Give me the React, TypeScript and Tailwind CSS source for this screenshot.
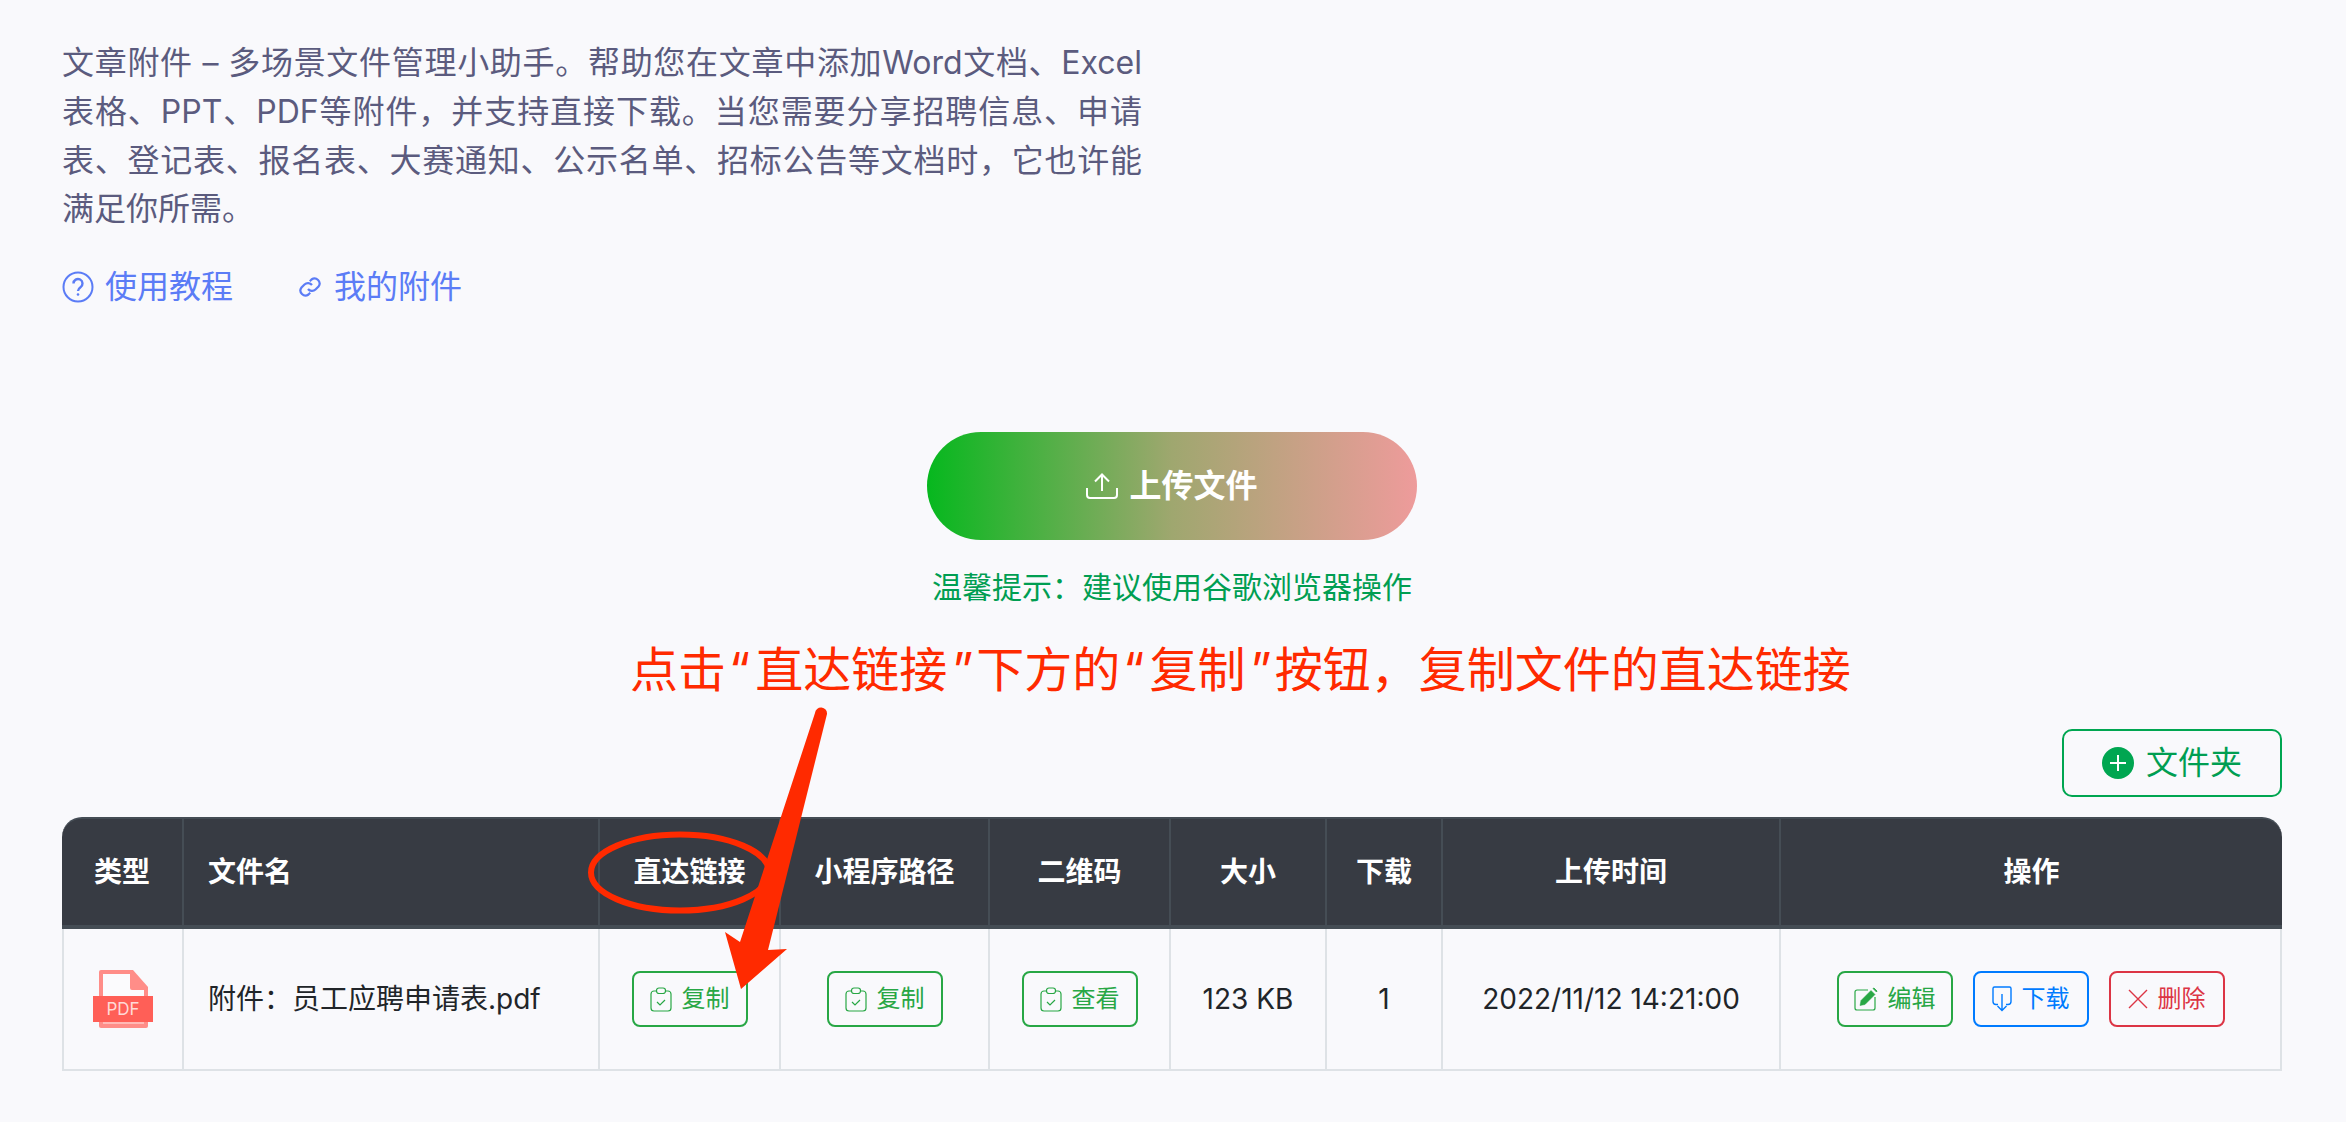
import type { ReactNode } from "react";

function ClipIcon() {
  return (
    <svg width="22" height="25" viewBox="0 0 22 25" fill="none" stroke="currentColor" strokeWidth="1.2">
      <path d="M6.5 4H4a3 3 0 0 0-3 3v14a3 3 0 0 0 3 3h14a3 3 0 0 0 3-3V7a3 3 0 0 0-3-3h-2.500" />
      <rect x="6.500" y="1" width="9" height="5.500" rx="2.500" />
      <path d="M7 15l3 3 5-5" />
    </svg>
  );
}

function EditIcon() {
  return (
    <svg width="24" height="24" viewBox="0 0 24 24" fill="none" stroke="currentColor">
      <path d="M14 3H3a2 2 0 0 0-2 2v16a2 2 0 0 0 2 2h16a2 2 0 0 0 2-2V10" strokeWidth="1.200" />
      <path d="M6 18.500l1-5L17 3.500l4 4-10 10z" fill="currentColor" strokeWidth="0.500" />
      <path d="M19 1.500l1-.5 3 3-.5 1z" fill="currentColor" strokeWidth="0.800" />
    </svg>
  );
}

function DownloadIcon() {
  return (
    <svg width="20" height="26" viewBox="0 0 20 26" fill="none" stroke="currentColor" strokeWidth="1.400">
      <path d="M6 18.500H4a3 3 0 0 1-3-3V2.500A1.500 1.500 0 0 1 2.500 1h15A1.500 1.500 0 0 1 19 2.500v13a3 3 0 0 1-3 3h-2" />
      <path d="M10 8v16.500M5.500 20l4.500 4.500 4.500-4.500" />
    </svg>
  );
}

function CloseIcon() {
  return (
    <svg width="20" height="20" viewBox="0 0 20 20" fill="none" stroke="currentColor" strokeWidth="1.400">
      <path d="M1 1l18 18M19 1L1 19" />
    </svg>
  );
}

function PdfIcon() {
  return (
    <svg width="60" height="60" viewBox="0 0 60 60" className="mx-auto">
      <path d="M6 3a2 2 0 0 1 2-2h32l15 17v39a2 2 0 0 1-2 2H8a2 2 0 0 1-2-2z" fill="#ff8d88" />
      <path d="M10 5h27v14a2 2 0 0 0 2 2h12v33H10z" fill="#fbfbfd" />
      <rect x="0" y="27" width="60" height="26" fill="#ff5f57" />
      <rect x="10" y="53" width="41" height="2" fill="#ffb9b5" />
      <text x="30" y="46" textAnchor="middle" fontSize="17" fill="#ffd9d6" fontFamily="Inter, sans-serif">PDF</text>
    </svg>
  );
}

function ActionButton({ icon, label, color }: { icon: ReactNode; label: string; color: string }) {
  const colors: Record<string, string> = {
    green: "border-[#28a745] text-[#28a745]",
    blue: "border-[#007bff] text-[#007bff]",
    red: "border-[#dc3545] text-[#dc3545]",
  };
  return (
    <button className={`inline-flex items-center justify-center gap-[10px] w-[116px] h-[56px] border-2 rounded-[8px] text-[24px] align-middle ${colors[color]}`}>
      {icon}
      <span>{label}</span>
    </button>
  );
}

const headers = ["类型", "文件名", "直达链接", "小程序路径", "二维码", "大小", "下载", "上传时间", "操作"];

const introLines = [
  "文章附件 – 多场景文件管理小助手。帮助您在文章中添加Word文档、Excel",
  "表格、PPT、PDF等附件，并支持直接下载。当您需要分享招聘信息、申请",
  "表、登记表、报名表、大赛通知、公示名单、招标公告等文档时，它也许能",
];

export default function App() {
  return (
    <div className="relative h-[1122px] overflow-hidden bg-[#f9f9fc] pl-[62px] pr-[64px] pt-[39px] font-['Inter','Noto_Sans_CJK_SC',sans-serif]">

      {/* INTRO */}
      <div className="w-[1080px] text-[32px] leading-[48.750px] text-[#5b5b7e]">
        {introLines.map((line) => (
          <p key={line} className="whitespace-nowrap text-justify [text-align-last:justify]">
            {line}
          </p>
        ))}
        <p>满足你所需。</p>
      </div>

      <div className="flex items-center h-[42px] mt-[32px] text-[32px] text-[#5b7cf6]">
        <svg width="32" height="32" viewBox="0 0 32 32" fill="none" stroke="currentColor" strokeWidth="2">
          <circle cx="16" cy="16" r="14.500" />
          <path d="M11.500 12.500a4.500 4.500 0 1 1 7 3.700c-1.600 1.100-2.500 2-2.500 3.800" strokeWidth="2.400" />
          <circle cx="16" cy="23.500" r="1.300" fill="currentColor" stroke="none" />
        </svg>
        <span className="ml-[11px]">使用教程</span>
        <svg width="24" height="24" viewBox="0 0 24 24" fill="none" stroke="currentColor" strokeWidth="2.200" className="ml-[65px]">
          <path d="M10 14a5 5 0 0 0 7.500.500l3-3a5 5 0 0 0-7-7l-1.700 1.700" />
          <path d="M14 10a5 5 0 0 0-7.500-.500l-3 3a5 5 0 0 0 7 7l1.700-1.700" />
        </svg>
        <span className="ml-[12px]">我的附件</span>
      </div>

      {/* UPLOAD */}
      <button className="flex items-center justify-center gap-[11px] w-[490px] h-[108px] ml-[865px] mt-[124px] rounded-full bg-linear-to-r/srgb from-[#06b81e] via-[#9fa76f] to-[#ee9b9b] text-white text-[32px] font-semibold">
        <svg width="32" height="26" viewBox="0 0 32 26" fill="none" stroke="currentColor" strokeWidth="2">
          <path d="M16 18V1.500M9 8.500l7-7 7 7" />
          <path d="M1 15v7a3 3 0 0 0 3 3h24a3 3 0 0 0 3-3v-7" />
        </svg>
        <span>上传文件</span>
      </button>

      <p className="w-[480px] ml-[870px] mt-[26px] text-[30px] leading-[42px] text-[#009e52]">
        温馨提示：建议使用谷歌浏览器操作
      </p>

      {/* ANNOTATION */}
      <p className="ml-[568px] mt-[30px] text-[48px] leading-[64px] whitespace-nowrap text-[#ff2a00]">
        点击<span className="ml-[3px] mr-[5px]">“</span>直达链接<span className="ml-[5px] mr-[3px]">”</span>下方的<span className="ml-[3px] mr-[5px]">“</span>复制<span className="ml-[5px] mr-[3px]">”</span>按钮，复制文件的直达链接
      </p>

      {/* FOLDER */}
      <div className="flex justify-end mt-[27px]">
        <button className="flex items-center justify-center gap-[12px] w-[220px] h-[68px] border-2 border-[#00a651] rounded-[10px] text-[32px] text-[#009e52]">
          <svg width="32" height="32" viewBox="0 0 32 32">
            <circle cx="16" cy="16" r="16" fill="#00a651" />
            <path d="M16 8v16M8 16h16" stroke="#fff" strokeWidth="2" />
          </svg>
          <span>文件夹</span>
        </button>
      </div>

      {/* TABLE */}
      <table className="w-[2220px] mt-[20px] table-fixed border-separate border-spacing-0 text-[28px] text-[#212529]">
        <colgroup>
          <col className="w-[122px]" />
          <col className="w-[416px]" />
          <col className="w-[181px]" />
          <col className="w-[209px]" />
          <col className="w-[181px]" />
          <col className="w-[156px]" />
          <col className="w-[116px]" />
          <col className="w-[338px]" />
          <col className="w-[501px]" />
        </colgroup>
        <thead>
          <tr>
            {headers.map((h, i) => (
              <th
                key={h}
                className={`h-[112px] bg-[#373b43] border-t-2 border-b-4 border-[#454d55] text-white font-bold ${
                  i === 0 ? "rounded-tl-[20px] text-center" : i === 1 ? "text-left pl-[24px]" : "text-center"
                } ${i === 8 ? "rounded-tr-[20px]" : "border-r-2"}`}
              >
                {h}
              </th>
            ))}
          </tr>
        </thead>
        <tbody>
          <tr className="[&>td]:h-[142px] [&>td]:border-b-2 [&>td]:border-r-2 [&>td]:border-[#dee2e6] [&>td]:text-center">
            <td className="border-l-2">
              <PdfIcon />
            </td>
            <td className="!text-left pl-[24px]">附件：员工应聘申请表.pdf</td>
            <td>
              <ActionButton icon={<ClipIcon />} label="复制" color="green" />
            </td>
            <td>
              <ActionButton icon={<ClipIcon />} label="复制" color="green" />
            </td>
            <td>
              <ActionButton icon={<ClipIcon />} label="查看" color="green" />
            </td>
            <td>123 KB</td>
            <td>1</td>
            <td>2022/11/12 14:21:00</td>
            <td>
              <div className="flex items-center justify-center gap-[20px]">
                <ActionButton icon={<EditIcon />} label="编辑" color="green" />
                <ActionButton icon={<DownloadIcon />} label="下载" color="blue" />
                <ActionButton icon={<CloseIcon />} label="删除" color="red" />
              </div>
            </td>
          </tr>
        </tbody>
      </table>

      {/* RED MARKUP OVER THE TABLE */}
      <svg width="2346" height="1122" viewBox="0 0 2346 1122" fill="none" className="absolute left-0 top-0 pointer-events-none">
        <ellipse cx="680" cy="872.500" rx="89" ry="38" stroke="#ff2a00" strokeWidth="6" />
        <path d="M815 713a6 6 0 0 1 12 1L768 950l19-1-46 40-16-57 15 10z" fill="#ff2a00" />
      </svg>
    </div>
  );
}
